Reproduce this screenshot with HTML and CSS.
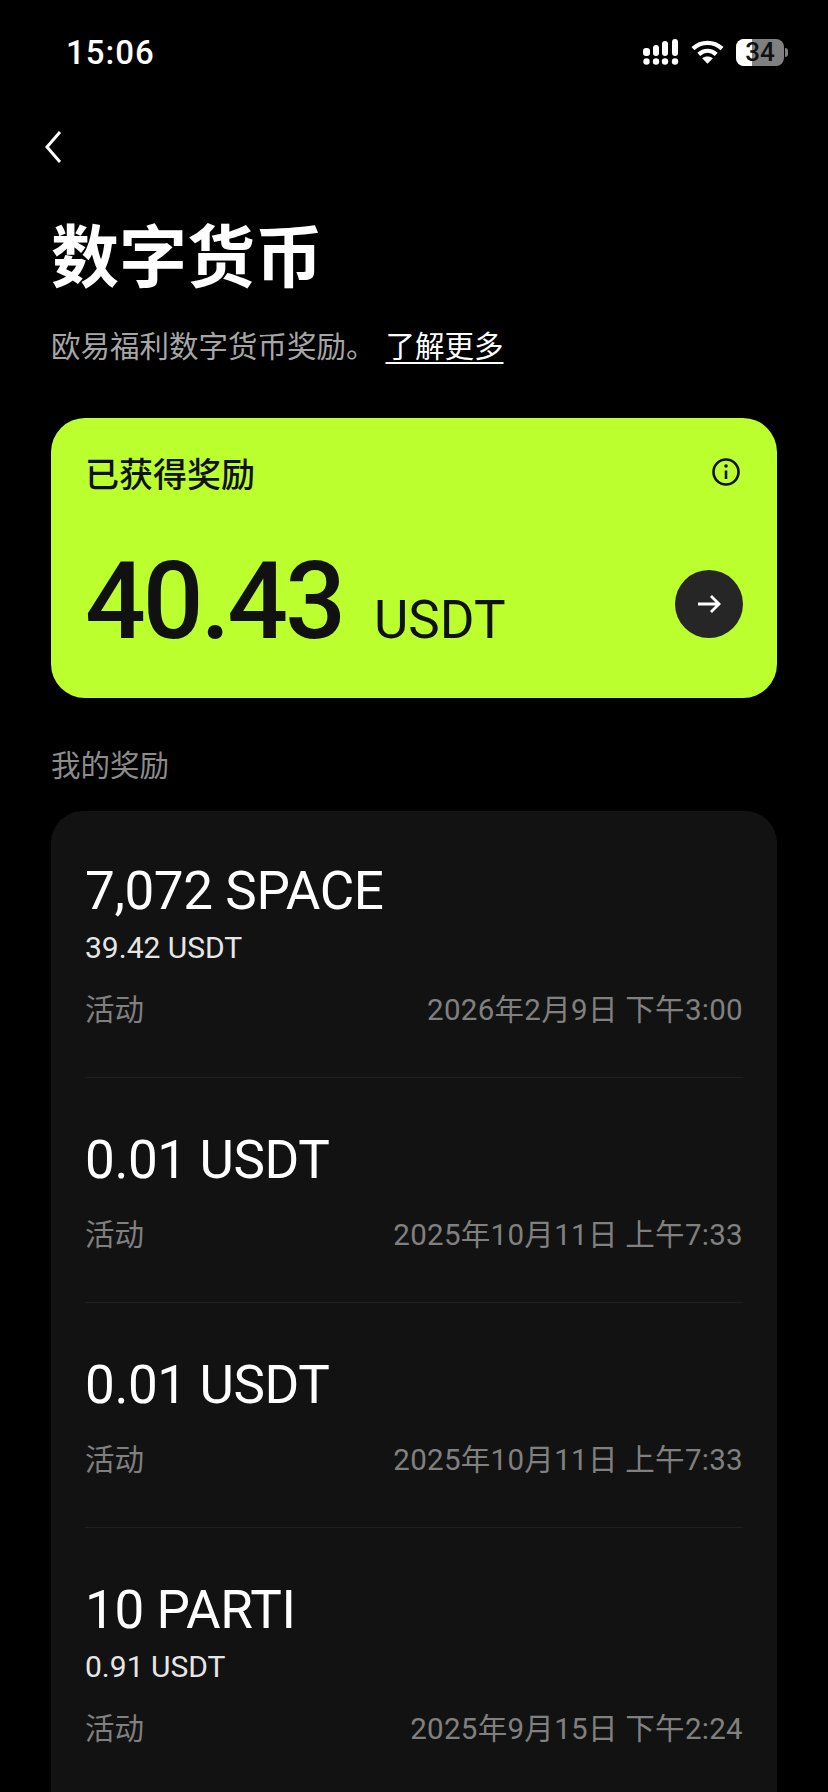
FILE: index.html
```html
<!DOCTYPE html>
<html lang="zh-CN">
<head>
    <meta charset="UTF-8">
    <meta name="viewport" content="width=device-width, initial-scale=1.0">
    <title>数字货币</title>
    <link rel="stylesheet" href="styles.css">
</head>
<body>
    <div class="page">
        <div class="status-bar">
            <span class="time">15:06</span>
            <div class="status-icons">
                <svg class="signal" width="36" height="26" viewBox="0 0 36 26" fill="#fff">
                    <rect x="0" y="9" width="7" height="8" rx="3"/>
                    <rect x="10" y="6" width="6" height="11" rx="3"/>
                    <rect x="19" y="2" width="6" height="15" rx="3"/>
                    <rect x="29" y="0" width="6" height="17" rx="3"/>
                    <circle cx="3.5" cy="22.500" r="3.200"/>
                    <circle cx="13" cy="22.500" r="3.200"/>
                    <circle cx="22" cy="22.500" r="3.200"/>
                    <circle cx="32" cy="22.500" r="3.200"/>
                </svg>
                <svg class="wifi" width="33" height="26" viewBox="0 0 34 26" fill="none" stroke="#fff" stroke-width="4.400">
                    <path d="M2 9.500C10.500 1.500 23.500 1.500 32 9.500"/>
                    <path d="M8 15.500C13.500 10.500 20.500 10.500 26 15.500"/>
                    <path d="M17 25L11.500 19.500C14.500 17 19.500 17 22.500 19.500Z" fill="#fff" stroke="none"/>
                </svg>
                <div class="battery">
                    <div class="battery-body">
                        <div class="battery-level"></div>
                        <span class="battery-num">34</span>
                    </div>
                    <div class="battery-tip"></div>
                </div>
            </div>
        </div>

        <div class="nav">
            <svg width="20" height="32" viewBox="0 0 20 32" fill="none" stroke="#fff" stroke-width="3">
                <path d="M16 1L3 16L16 31"/>
            </svg>
        </div>

        <h1>数字货币</h1>
        <p class="intro">欧易福利数字货币奖励。<a class="more">了解更多</a></p>

        <div class="total-card">
            <div class="total-head">
                <span class="total-label">已获得奖励</span>
                <svg class="info-icon" width="28" height="28" viewBox="0 0 28 28" fill="none" stroke="#111" stroke-width="2.600">
                    <circle cx="14" cy="14" r="12.500"/>
                    <path d="M14 12.500V21"/>
                    <circle cx="14" cy="8" r="1.800" fill="#111" stroke="none"/>
                </svg>
            </div>
            <div class="total-main">
                <div class="total-amount">
                    <span class="total-num">40.43</span>
                    <span class="total-unit">USDT</span>
                </div>
                <div class="total-go">
                    <svg width="24" height="20" viewBox="0 0 24 20" fill="none" stroke="#fff" stroke-width="2.800">
                        <path d="M1 10H22M14 2L22 10L14 18"/>
                    </svg>
                </div>
            </div>
        </div>

        <div class="section-title">我的奖励</div>

        <div class="reward-list">
            <div class="reward">
                <div class="reward-amount">7,072 SPACE</div>
                <div class="reward-value">39.42 USDT</div>
                <div class="reward-meta">
                    <span>活动</span>
                    <span class="reward-date">2026年2月9日 下午3:00</span>
                </div>
            </div>
            <div class="reward">
                <div class="reward-amount">0.01 USDT</div>
                <div class="reward-meta">
                    <span>活动</span>
                    <span class="reward-date">2025年10月11日 上午7:33</span>
                </div>
            </div>
            <div class="reward">
                <div class="reward-amount">0.01 USDT</div>
                <div class="reward-meta">
                    <span>活动</span>
                    <span class="reward-date">2025年10月11日 上午7:33</span>
                </div>
            </div>
            <div class="reward">
                <div class="reward-amount">10 PARTI</div>
                <div class="reward-value">0.91 USDT</div>
                <div class="reward-meta">
                    <span>活动</span>
                    <span class="reward-date">2025年9月15日 下午2:24</span>
                </div>
            </div>
        </div>
    </div>
</body>
</html>
```
FILE: styles.css
```css
* {
    margin: 0;
    padding: 0;
    box-sizing: border-box;
}

html, body {
    height: 100%;
    overflow: hidden;
}

body {
    font-family: "Roboto", "Noto Sans CJK SC", sans-serif;
    background-color: #000;
    color: #fff;
}

.page {
    height: 1792px;
    overflow: hidden;
    padding: 0 51px;
}

.status-bar {
    display: flex;
    justify-content: space-between;
    align-items: center;
    height: 28px;
    margin-top: 38px;
    margin-left: 15px;
    margin-right: -11px;
}

.time {
    font-size: 33px;
    font-weight: 500;
    letter-spacing: 1px;
}

.status-icons {
    display: flex;
    align-items: center;
    gap: 12px;
}

.battery {
    display: flex;
    align-items: center;
    gap: 1px;
}

.battery-body {
    position: relative;
    width: 48px;
    height: 27px;
    border-radius: 8px;
    background-color: #808080;
    overflow: hidden;
    display: flex;
    justify-content: center;
    align-items: center;
}

.battery-level {
    position: absolute;
    left: 0;
    top: 0;
    bottom: 0;
    width: 16px;
    background-color: #fff;
}

.battery-num {
    position: relative;
    color: #111;
    font-size: 26px;
    font-weight: 500;
}

.battery-tip {
    width: 3px;
    height: 9px;
    border-radius: 0 3px 3px 0;
    background-color: #808080;
}

.nav {
    height: 32px;
    margin-top: 65px;
    margin-left: -7px;
}

h1 {
    font-size: 68px;
    font-weight: 700;
    line-height: 90px;
    margin-top: 51px;
}

.intro {
    font-size: 29.500px;
    line-height: 40px;
    color: #a6a6a6;
    margin-top: 23px;
}

.more {
    color: #fff;
    margin-left: 10px;
    text-decoration: underline;
    text-underline-offset: 5px;
}

.total-card {
    height: 280px;
    margin-top: 51px;
    border-radius: 34px;
    background-color: #bcff2f;
    color: #111;
    padding: 36px 34px 0;
}

.total-head {
    display: flex;
    justify-content: space-between;
    align-items: center;
    height: 36px;
}

.total-label {
    font-size: 34px;
    font-weight: 500;
}

.info-icon {
    margin-right: 3px;
}

.total-main {
    display: flex;
    justify-content: space-between;
    align-items: center;
    margin-top: 57px;
}

.total-amount {
    display: flex;
    align-items: baseline;
    gap: 31px;
}

.total-num {
    font-size: 107px;
    font-weight: 500;
    line-height: 110px;
    letter-spacing: -3px;
}

.total-unit {
    font-size: 53px;
}

.total-go {
    width: 68px;
    height: 68px;
    margin-top: 4px;
    border-radius: 50%;
    background-color: #262626;
    display: flex;
    justify-content: center;
    align-items: center;
}

.section-title {
    font-size: 29.500px;
    line-height: 40px;
    color: #8c8c8c;
    margin-top: 48px;
}

.reward-list {
    margin-top: 25px;
    border-radius: 32px 32px 0 0;
    background-color: #121212;
    padding: 0 34px;
}

.reward {
    padding: 52px 0 47px;
    border-bottom: 1px solid #202020;
}

.reward:first-child {
    padding-top: 50px;
}

.reward-amount {
    font-size: 53px;
    line-height: 60px;
    letter-spacing: -0.400px;
}

.reward-value {
    font-size: 30px;
    line-height: 34px;
    color: #e6e6e6;
    margin-top: 10px;
}

.reward-meta {
    display: flex;
    justify-content: space-between;
    font-size: 29.500px;
    line-height: 40px;
    color: #808080;
    margin-top: 25px;
}

.reward-date {
    letter-spacing: 0.300px;
}
```
